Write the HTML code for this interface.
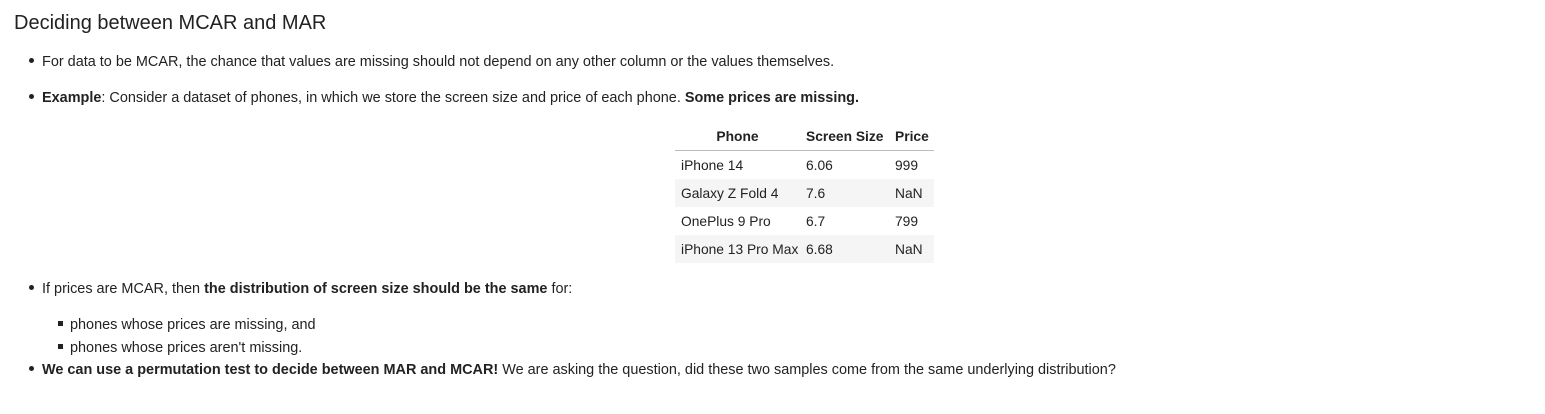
<!DOCTYPE html>
<html><head><meta charset="utf-8">
<style>
html,body{margin:0;padding:0;background:#fff;width:1545px;height:414px;overflow:hidden;}
body{font-family:"Liberation Sans",sans-serif;color:#222;font-size:14.45px;position:relative;}
.a{position:absolute;white-space:nowrap;line-height:20px;}
h1{position:absolute;left:14px;top:9px;margin:0;font-size:20px;font-weight:normal;line-height:28px;color:#222;}
.dot{position:absolute;width:5px;height:5px;border-radius:50%;background:#222;}
.sq{position:absolute;width:5px;height:5px;background:#222;}
table{position:absolute;left:675px;top:122px;border-collapse:collapse;font-size:13.8px;table-layout:fixed;width:259px;}
td,th{height:28px;padding:0 6px;text-align:left;white-space:nowrap;overflow:visible;}
th{font-weight:bold;border-bottom:1px solid #bbb;}
tr.s td{background:#f5f5f5;}
</style></head><body>
<h1>Deciding between MCAR and MAR</h1>
<div class="dot" style="left:29px;top:58px"></div>
<div class="a" style="left:42px;top:52px">For data to be MCAR, the chance that values are missing should not depend on any other column or the values themselves.</div>
<div class="dot" style="left:29px;top:94px"></div>
<div class="a" style="left:42px;top:88px"><b>Example</b>: Consider a dataset of phones, in which we store the screen size and price of each phone. <b>Some prices are missing.</b></div>
<table>
<colgroup><col style="width:125px"><col style="width:89px"><col style="width:45px"></colgroup>
<tr><th style="text-align:center">Phone</th><th>Screen Size</th><th>Price</th></tr>
<tr><td>iPhone 14</td><td>6.06</td><td>999</td></tr>
<tr class="s"><td>Galaxy Z Fold 4</td><td>7.6</td><td>NaN</td></tr>
<tr><td>OnePlus 9 Pro</td><td>6.7</td><td>799</td></tr>
<tr class="s"><td>iPhone 13 Pro Max</td><td>6.68</td><td>NaN</td></tr>
</table>
<div class="dot" style="left:29px;top:285px"></div>
<div class="a" style="left:42px;top:279px">If prices are MCAR, then <b>the distribution of screen size should be the same</b> for:</div>
<div class="sq" style="left:58px;top:321px"></div>
<div class="a" style="left:70px;top:315px">phones whose prices are missing, and</div>
<div class="sq" style="left:58px;top:344px"></div>
<div class="a" style="left:70px;top:338px">phones whose prices aren't missing.</div>
<div class="dot" style="left:29px;top:366px"></div>
<div class="a" style="left:42px;top:360px"><b>We can use a permutation test to decide between MAR and MCAR!</b> We are asking the question, did these two samples come from the same underlying distribution?</div>
</body></html>
